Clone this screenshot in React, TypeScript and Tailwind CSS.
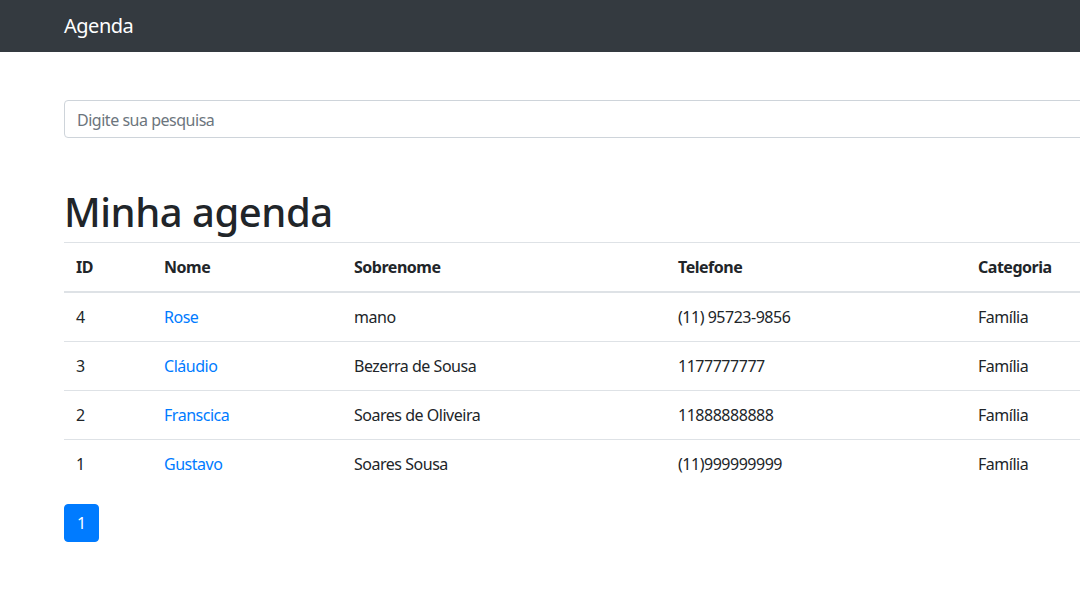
const contatos = [
  { id: 4, nome: 'Rose', sobrenome: 'mano', telefone: '(11) 95723-9856', categoria: 'Família' },
  { id: 3, nome: 'Cláudio', sobrenome: 'Bezerra de Sousa', telefone: '1177777777', categoria: 'Família' },
  { id: 2, nome: 'Franscica', sobrenome: 'Soares de Oliveira', telefone: '11888888888', categoria: 'Família' },
  { id: 1, nome: 'Gustavo', sobrenome: 'Soares Sousa', telefone: '(11)999999999', categoria: 'Família' },
];

export default function App() {
  return (
    <div
      className="min-h-screen bg-white overflow-hidden text-[16px] text-[#212529] tracking-[-0.03em]"
      style={{ fontFamily: '"Segoe UI", "Noto Sans", sans-serif' }}
    >
      <nav className="h-[52px] bg-[#343a40] flex items-center">
        <div className="pl-[64px]">
          <span className="text-white text-[20px] leading-[30px]">Agenda</span>
        </div>
      </nav>

      <main className="pl-[64px] pt-[48px]">
        <div className="w-[1110px]">
          <input
            type="text"
            placeholder="Digite sua pesquisa"
            className="w-full h-[38px] px-3 pt-[1px] border border-[#ced4da] rounded-[4px] text-[16px] tracking-[-0.03em] placeholder:text-[#6c757d] outline-none"
          />

          <h1 className="mt-[48px] mb-2 pt-[2px] h-[48px] text-[40px] leading-[48px] font-medium">Minha agenda</h1>

          <table className="w-full border-collapse mb-4 table-fixed">
            <thead>
              <tr className="border-t border-[#dee2e6] border-b-2">
                <th className="w-[88px] p-3 text-left font-bold leading-6">ID</th>
                <th className="w-[190px] p-3 text-left font-bold leading-6">Nome</th>
                <th className="w-[324px] p-3 text-left font-bold leading-6">Sobrenome</th>
                <th className="w-[300px] p-3 text-left font-bold leading-6">Telefone</th>
                <th className="p-3 text-left font-bold leading-6">Categoria</th>
              </tr>
            </thead>
            <tbody>
              {contatos.map((c) => (
                <tr key={c.id} className="border-t border-[#dee2e6]">
                  <td className="p-3 leading-6">{c.id}</td>
                  <td className="p-3 leading-6">
                    <a href="#" className="text-[#007bff]">{c.nome}</a>
                  </td>
                  <td className="p-3 leading-6">{c.sobrenome}</td>
                  <td className="p-3 leading-6">{c.telefone}</td>
                  <td className="p-3 leading-6">{c.categoria}</td>
                </tr>
              ))}
            </tbody>
          </table>

          <ul className="flex">
            <li>
              <a
                href="#"
                className="block h-[38px] px-3 py-2 leading-5 bg-[#007bff] border border-[#007bff] text-white rounded-[4px]"
              >
                1
              </a>
            </li>
          </ul>
        </div>
      </main>
    </div>
  );
}
